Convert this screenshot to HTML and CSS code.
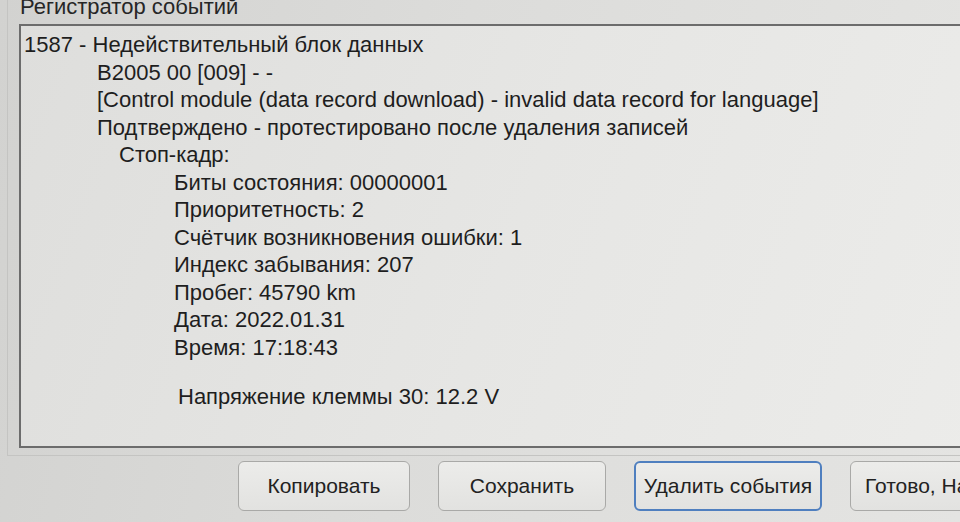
FILE: index.html
```
<!DOCTYPE html>
<html lang="ru">
<head>
<meta charset="utf-8">
<title>Регистратор событий</title>
<link rel="stylesheet" href="styles.css">
</head>
<body>
<div class="screen">
  <div class="group">
    <div class="group-title">Регистратор событий</div>
    <div class="log">
      <div class="line l0">1587 - Недействительный блок данных</div>
      <div class="line l1">B2005 00 [009] - -</div>
      <div class="line l1">[Control module (data record download) - invalid data record for language]</div>
      <div class="line l1">Подтверждено - протестировано после удаления записей</div>
      <div class="line l2">Стоп-кадр:</div>
      <div class="line l3">Биты состояния: 00000001</div>
      <div class="line l3">Приоритетность: 2</div>
      <div class="line l3">Счётчик возникновения ошибки: 1</div>
      <div class="line l3">Индекс забывания: 207</div>
      <div class="line l3">Пробег: 45790 km</div>
      <div class="line l3">Дата: 2022.01.31</div>
      <div class="line l3">Время: 17:18:43</div>
      <div class="line l3 gap">Напряжение клеммы 30: 12.2 V</div>
    </div>
  </div>
  <div class="buttons">
    <button class="btn b1">Копировать</button>
    <button class="btn b2">Сохранить</button>
    <button class="btn b3 focus">Удалить события</button>
    <button class="btn b4">Готово, Назад</button>
  </div>
</div>
</body>
</html>
```
FILE: styles.css
```
html, body {
  margin: 0;
  padding: 0;
  width: 960px;
  height: 522px;
  overflow: hidden;
}
body {
  font-family: "Liberation Sans", Arial, sans-serif;
  color: #1e1e1e;
  background: linear-gradient(100deg, #d2d2d0 0%, #dcdcda 45%, #e4e4e2 100%);
}
.screen {
  width: 960px;
  height: 522px;
  overflow: hidden;
}
.group {
  margin-left: 7px;
  width: 1000px;
  height: 460px;
  border-left: 1px solid #c4c4c2;
  border-bottom: 1px solid #c4c4c2;
  box-sizing: border-box;
  padding-left: 11px;
}
.group-title {
  font-size: 22px;
  line-height: 22px;
  margin-top: -4px;
  margin-left: 1px;
  height: 22px;
  color: #262626;
  margin-bottom: 6px;
}
.log {
  height: 424px;
  border-top: 2px solid #6c6c6c;
  border-left: 2px solid #6c6c6c;
  border-bottom: 2px solid #6c6c6c;
  box-sizing: border-box;
  background: linear-gradient(110deg, #dededc 0%, #e6e6e4 50%, #ececea 100%);
  padding-top: 5px;
  overflow: hidden;
}
.line {
  font-size: 22px;
  line-height: 27.5px;
  white-space: nowrap;
}
.l0 { padding-left: 3px; }
.l1 { padding-left: 76px; }
.l2 { padding-left: 98px; }
.l3 { padding-left: 153px; }
.gap { margin-top: 22px; padding-left: 157px; }
.buttons {
  display: flex;
  gap: 28px;
  padding-left: 238px;
  margin-top: 5px;
}
.btn {
  flex: none;
  height: 50px;
  font-family: "Liberation Sans", Arial, sans-serif;
  font-size: 21px;
  color: #222;
  background: linear-gradient(#ececea, #e2e2e0);
  border: 1px solid #a9a9a7;
  border-radius: 6px;
  padding: 0;
  white-space: nowrap;
  overflow: hidden;
}
.b1 { width: 172px; }
.b2 { width: 168px; }
.b3 { width: 188px; }
.b4 { width: 170px; text-align: left; padding-left: 14px; }
.focus {
  border: 2px solid #4f7fbf;
}
```
